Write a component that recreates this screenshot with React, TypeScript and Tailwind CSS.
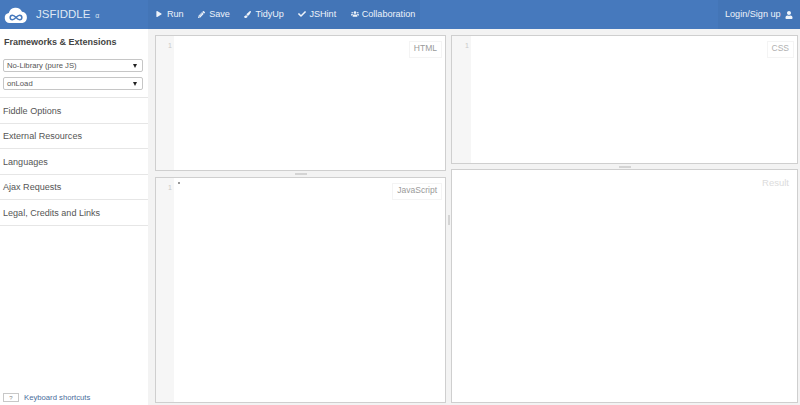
import React from "react";
import { FaPlay, FaPencilAlt, FaPaintBrush, FaCheck, FaUsers, FaUser } from "react-icons/fa";

const font = "font-['Liberation_Sans',Arial,sans-serif]";

function NavItem({ icon, label }: { icon: React.ReactNode; label: string }) {
  return (
    <div className="flex items-center gap-[3px] text-[9.1px] text-[#eef3fa]">
      <span className="flex w-[8px] justify-start">{icon}</span>
      <span>{label}</span>
    </div>
  );
}

function SelectBox({ value }: { value: string }) {
  return (
    <div className="flex h-[13px] items-center justify-between rounded-[2px] border border-[#c6c6c6] bg-white pl-[3px] pr-[5px] text-[7.7px] text-[#555]">
      <span>{value}</span>
      <span className="h-0 w-0 border-x-[2.5px] border-t-[4px] border-x-transparent border-t-[#222]" />
    </div>
  );
}

function SideRow({ label }: { label: string }) {
  return (
    <div className="flex h-[25.5px] items-center border-b border-[#e6e6e6] pl-[3px] pt-[3px] text-[9.05px] text-[#555]">
      {label}
    </div>
  );
}

function Gutter({ width }: { width: string }) {
  return (
    <div className={`${width} bg-[#f6f6f6] pr-[2px] pt-[5px] text-right text-[7px] leading-[9px] text-[#c9c9c9]`}>1</div>
  );
}

function Tag({ label, color }: { label: string; color: string }) {
  return (
    <div className={`absolute right-[3px] top-[5px] border border-[#f4f4f4] bg-white px-[4px] pb-[3px] pt-[1px] text-[8.5px] leading-[11px] ${color}`}>
      {label}
    </div>
  );
}

function HGrip() {
  return <div className="absolute left-1/2 top-[2px] h-[2px] w-[12px] -translate-x-1/2 bg-[#d4d4d4]" />;
}

export default function App() {
  return (
    <div className={`flex h-[405px] w-[800px] flex-col overflow-hidden bg-[#f3f3f3] ${font}`}>
      <header className="flex h-[29px] shrink-0 items-center justify-between bg-[#4679bd]">
        <div className="flex h-full">
          <div className="flex w-[148px] items-center pl-[4px]">
            <svg width="24" height="20" viewBox="0 0 24 18">
              <path d="M6 17a5 5 0 0 1-1.2-9.900A7 7 0 0 1 18 5.800 5.700 5.700 0 0 1 18.500 17Z" fill="#fff" />
              <path
                d="M12 11.500c-1.300-1.500-2.300-2.300-3.600-2.300a2.200 2.200 0 0 0 0 4.500c1.300 0 2.300-.8 3.600-2.200s2.300-2.300 3.600-2.300a2.200 2.200 0 0 1 0 4.500c-1.300 0-2.300-.8-3.600-2.200Z"
                fill="none"
                stroke="#4679bd"
                strokeWidth="1.500"
              />
            </svg>
            <span className="ml-[8px] text-[11.5px] text-[#dfe8f4]">JSFIDDLE</span>
            <span className="ml-[5px] mt-[3px] text-[7px] text-[#dbe5f2]">α</span>
          </div>
          <nav className="flex h-full w-[272px] items-center gap-[14.5px] bg-[#4375b7] pl-[8px]">
            <NavItem icon={<FaPlay size={6} />} label="Run" />
            <NavItem icon={<FaPencilAlt size={7} />} label="Save" />
            <NavItem icon={<FaPaintBrush size={7} />} label="TidyUp" />
            <NavItem icon={<FaCheck size={8} />} label="JSHint" />
            <NavItem icon={<FaUsers size={8} />} label="Collaboration" />
          </nav>
        </div>
        <div className="flex h-full w-[82px] items-center gap-[4px] bg-[#4375b7] pl-[7px] text-[9.1px] text-[#eef3fa]">
          <span>Login/Sign up</span>
          <FaUser size={8} />
        </div>
      </header>
      <div className="flex min-h-0 flex-1">
        <aside className="flex w-[148px] shrink-0 flex-col bg-white">
          <h2 className="mt-[7px] pl-[4px] text-[9px] font-bold leading-[13px] text-[#444]">
            Frameworks &amp; Extensions
          </h2>
          <div className="mt-[10px] flex flex-col gap-[5px] border-b border-[#e6e6e6] pb-[7px] pl-[3px] pr-[5px]">
            <SelectBox value="No-Library (pure JS)" />
            <SelectBox value="onLoad" />
          </div>
          <SideRow label="Fiddle Options" />
          <SideRow label="External Resources" />
          <SideRow label="Languages" />
          <SideRow label="Ajax Requests" />
          <SideRow label="Legal, Credits and Links" />
          <div className="mt-auto flex items-center gap-[5px] pb-[3px] pl-[3px]">
            <span className="flex h-[9px] w-[16px] items-center justify-center border border-[#c8c8c8] text-[6px] leading-none text-[#888]">?</span>
            <span className="text-[7.7px] leading-[9px] text-[#4a6d9c]">Keyboard shortcuts</span>
          </div>
        </aside>
        <main className="flex min-w-0 flex-1 gap-[5px] pb-[2px] pl-[7px] pr-[2px] pt-[6px]">
          <div className="relative flex w-[291px] flex-col">
            <div className="relative flex h-[136px] shrink-0 border border-[#cfcfcf] bg-white">
              <Gutter width="w-[18px]" />
              <Tag label="HTML" color="text-[#9a9a9a]" />
            </div>
            <div className="relative h-[6px] shrink-0"><HGrip /></div>
            <div className="relative flex min-h-0 flex-1 border border-[#cfcfcf] bg-white">
              <Gutter width="w-[18px]" />
              <div className="ml-[4px] mt-[4px] h-[2px] w-[2px] bg-[#999]" />
              <Tag label="JavaScript" color="text-[#9a9a9a]" />
            </div>
            <div className="absolute right-[-4px] top-[180px] h-[10px] w-[2px] bg-[#d4d4d4]" />
          </div>
          <div className="flex min-w-0 flex-1 flex-col">
            <div className="relative flex h-[129px] shrink-0 border border-[#cfcfcf] bg-white">
              <Gutter width="w-[19px]" />
              <Tag label="CSS" color="text-[#b0b0b0]" />
            </div>
            <div className="relative h-[5px] shrink-0"><HGrip /></div>
            <div className="relative min-h-0 flex-1 border border-[#cfcfcf] bg-white">
              <div className="absolute right-[8px] top-[7px] text-[9.5px] leading-[11px] text-[#dcdcdc]">Result</div>
            </div>
          </div>
        </main>
      </div>
    </div>
  );
}
